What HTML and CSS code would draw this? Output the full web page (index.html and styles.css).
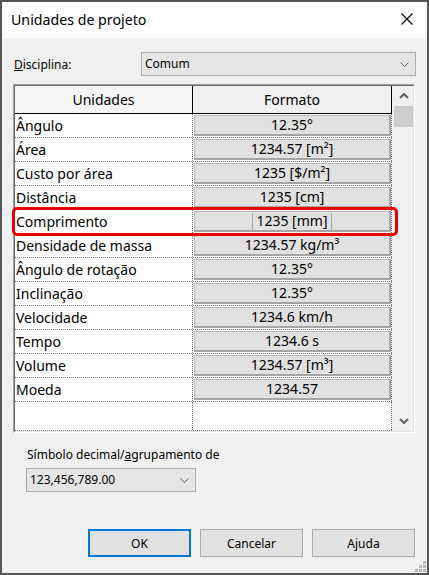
FILE: index.html
```html
<!DOCTYPE html>
<html lang="pt">
<head>
<meta charset="utf-8">
<title>Unidades de projeto</title>
<link rel="stylesheet" href="styles.css">
</head>
<body>
<div class="window">
  <div class="titlebar">
    <span class="title">Unidades de projeto</span>
    <svg class="close" width="12" height="12" viewBox="0 0 12 12"><path d="M0.5 0.5 L11.5 11.5 M11.5 0.5 L0.5 11.5" stroke="#000" stroke-width="1.1" fill="none"/></svg>
  </div>
  <div class="content">
    <div class="disc-row">
      <span class="disc-label"><u>D</u>isciplina:</span>
      <div class="combo combo-wide">
        <span>Comum</span>
        <svg width="9" height="5" viewBox="0 0 9 5"><path d="M0.5 0.5 L4.5 4.5 L8.5 0.5" stroke="#606060" stroke-width="1" fill="none"/></svg>
      </div>
    </div>

    <div class="table">
      <div class="table-inner">
        <div class="grid">
          <div class="hrow">
            <div class="hcell hcell-a">Unidades</div>
            <div class="hcell hcell-b">Formato</div>
          </div>
          <div class="row"><div class="lab">Ângulo</div><div class="val"><div class="box">12.35°</div></div></div>
          <div class="row"><div class="lab">Área</div><div class="val"><div class="box">1234.57 [m²]</div></div></div>
          <div class="row"><div class="lab">Custo por área</div><div class="val"><div class="box">1235 [$/m²]</div></div></div>
          <div class="row"><div class="lab">Distância</div><div class="val"><div class="box">1235 [cm]</div></div></div>
          <div class="row"><div class="lab">Comprimento</div><div class="val"><div class="box"><span class="edit">1235 [mm]</span></div></div></div>
          <div class="row"><div class="lab">Densidade de massa</div><div class="val"><div class="box">1234.57 kg/m³</div></div></div>
          <div class="row"><div class="lab">Ângulo de rotação</div><div class="val"><div class="box">12.35°</div></div></div>
          <div class="row"><div class="lab">Inclinação</div><div class="val"><div class="box">12.35°</div></div></div>
          <div class="row"><div class="lab">Velocidade</div><div class="val"><div class="box">1234.6 km/h</div></div></div>
          <div class="row"><div class="lab">Tempo</div><div class="val"><div class="box">1234.6 s</div></div></div>
          <div class="row"><div class="lab">Volume</div><div class="val"><div class="box">1234.57 [m³]</div></div></div>
          <div class="row"><div class="lab">Moeda</div><div class="val"><div class="box">1234.57</div></div></div>
          <div class="row row-empty"><div class="lab"></div><div class="val"></div></div>
        </div>
        <div class="scrollbar">
          <div class="sb-btn">
            <svg width="10" height="6" viewBox="0 0 10 6"><path d="M1 5 L5 1 L9 5" stroke="#606060" stroke-width="2" fill="none"/></svg>
          </div>
          <div class="sb-thumb"></div>
          <div class="sb-track"></div>
          <div class="sb-btn">
            <svg width="10" height="6" viewBox="0 0 10 6"><path d="M1 1 L5 5 L9 1" stroke="#606060" stroke-width="2" fill="none"/></svg>
          </div>
        </div>
      </div>
      <div class="highlight"></div>
    </div>

    <div class="dec">
      <div class="dec-label">Símbolo decimal/<u>a</u>grupamento de</div>
      <div class="combo combo-dec">
        <span>123,456,789.00</span>
        <svg width="9" height="5" viewBox="0 0 9 5"><path d="M0.5 0.5 L4.5 4.5 L8.5 0.5" stroke="#606060" stroke-width="1" fill="none"/></svg>
      </div>
    </div>

    <div class="buttons">
      <div class="btn btn-default">OK</div>
      <div class="btn">Cancelar</div>
      <div class="btn">Ajuda</div>
    </div>
  </div>
  <svg class="grip" width="12" height="12" viewBox="0 0 12 12">
    <rect x="9" y="1" width="3" height="3" fill="#b9b9b9"/>
    <rect x="5" y="5" width="3" height="3" fill="#b9b9b9"/>
    <rect x="9" y="5" width="3" height="3" fill="#b9b9b9"/>
    <rect x="1" y="9" width="3" height="3" fill="#b9b9b9"/>
    <rect x="5" y="9" width="3" height="3" fill="#b9b9b9"/>
    <rect x="9" y="9" width="3" height="3" fill="#b9b9b9"/>
  </svg>
</div>
</body>
</html>
```

FILE: styles.css
```css
* { box-sizing: border-box; }
html, body { margin: 0; padding: 0; }
body {
  width: 429px;
  height: 575px;
  overflow: hidden;
  font-family: "Noto Sans", "Open Sans", sans-serif;
  font-size: 12px;
  color: #000;
  background: #f0f0f0;
}
.window {
  position: relative;
  width: 429px;
  height: 575px;
  border: 2px solid #555;
  background: #f0f0f0;
  display: flex;
  flex-direction: column;
}
.titlebar {
  height: 36px;
  flex: none;
  background: #fff;
  display: flex;
  align-items: center;
  justify-content: space-between;
  padding: 0 14px 0 9px;
}
.title { line-height: 36px; font-size: 14.2px; }
.close { display: block; margin-top: -2px; }

.content {
  padding: 14px 11px 0 11px;
  display: flex;
  flex-direction: column;
}
.disc-row {
  display: flex;
  align-items: center;
  height: 24px;
}
.disc-label { width: 128px; padding-left: 1px; }
.combo {
  height: 24px;
  border: 1px solid #acacac;
  background: #e5e5e5;
  display: flex;
  align-items: center;
  justify-content: space-between;
  padding: 0 6px 0 3px;
  line-height: 20px;
}
.combo svg { display: block; }
.combo-wide { flex: 1; }

.table {
  position: relative;
  margin-top: 8px;
  width: 402px;
  height: 349px;
  border: 1px solid;
  border-color: #a0a0a0 #fff #fff #a0a0a0;
  font-size: 14px;
}
.table-inner {
  height: 100%;
  border: 1px solid;
  border-color: #696969 #e3e3e3 #e3e3e3 #696969;
  background: #fff;
  display: flex;
}
.grid {
  width: 377px;
  display: flex;
  flex-direction: column;
}
.hrow {
  display: flex;
  height: 28px;
  border-bottom: 1px solid #000;
  flex: none;
}
.hcell {
  background: #f0f0f0;
  text-align: center;
  line-height: 27px;
  border-right: 1px solid #000;
}
.hcell-a { width: 178px; background: #f6f6f6; }
.hcell-b { width: 199px; }
.row {
  display: flex;
  height: 24px;
  flex: none;
  border-bottom: 1px dotted #7a7a7a;
}
.row-empty { flex: 1; }
.lab {
  width: 178px;
  border-right: 1px dotted #7a7a7a;
  padding-left: 1px;
  line-height: 23px;
  white-space: nowrap;
}
.val {
  width: 199px;
  border-right: 1px dotted #7a7a7a;
  padding: 1px 0 1px 1px;
}
.box {
  width: 197px;
  height: 21px;
  background: #e1e1e1;
  border-style: solid;
  border-width: 1px 2px 2px 1px;
  border-color: #b8b8b8 #a5a5a5 #a5a5a5 #b8b8b8;
  text-align: center;
  line-height: 18px;
  white-space: nowrap;
}
.edit {
  display: inline-block;
  height: 17px;
  margin-top: 1px;
  padding: 0 3px;
  border-left: 1px solid #a8a8a8;
  border-right: 1px solid #a8a8a8;
  line-height: 16px;
  vertical-align: top;
}

.scrollbar {
  width: 21px;
  background: #f0f0f0;
  display: flex;
  flex-direction: column;
}
.sb-btn {
  height: 20px;
  display: flex;
  align-items: center;
  justify-content: center;
  padding-left: 2px;
}
.sb-btn svg { display: block; }
.sb-thumb {
  height: 21px;
  margin-left: 2px;
  background: #cdcdcd;
}
.sb-track { flex: 1; }

.highlight {
  position: absolute;
  left: -2px;
  top: 122px;
  width: 386px;
  height: 29px;
  border: 3px solid #e80000;
  border-radius: 5px;
}

.dec {
  margin-top: 12px;
  padding-left: 13px;
  display: flex;
  flex-direction: column;
  align-items: flex-start;
}
.dec-label { line-height: 20px; padding-left: 1px; }
.combo-dec {
  margin-top: 3px;
  width: 170px;
}

.buttons {
  margin-top: 37px;
  margin-right: 1px;
  display: flex;
  justify-content: flex-end;
  gap: 9px;
}
.btn {
  width: 103px;
  height: 28px;
  background: #e1e1e1;
  border: 1px solid #adadad;
  display: flex;
  align-items: center;
  justify-content: center;
}
.btn-default { border: 2px solid #0078d7; }

.grip {
  position: absolute;
  right: 1px;
  bottom: 1px;
  display: block;
}
```
